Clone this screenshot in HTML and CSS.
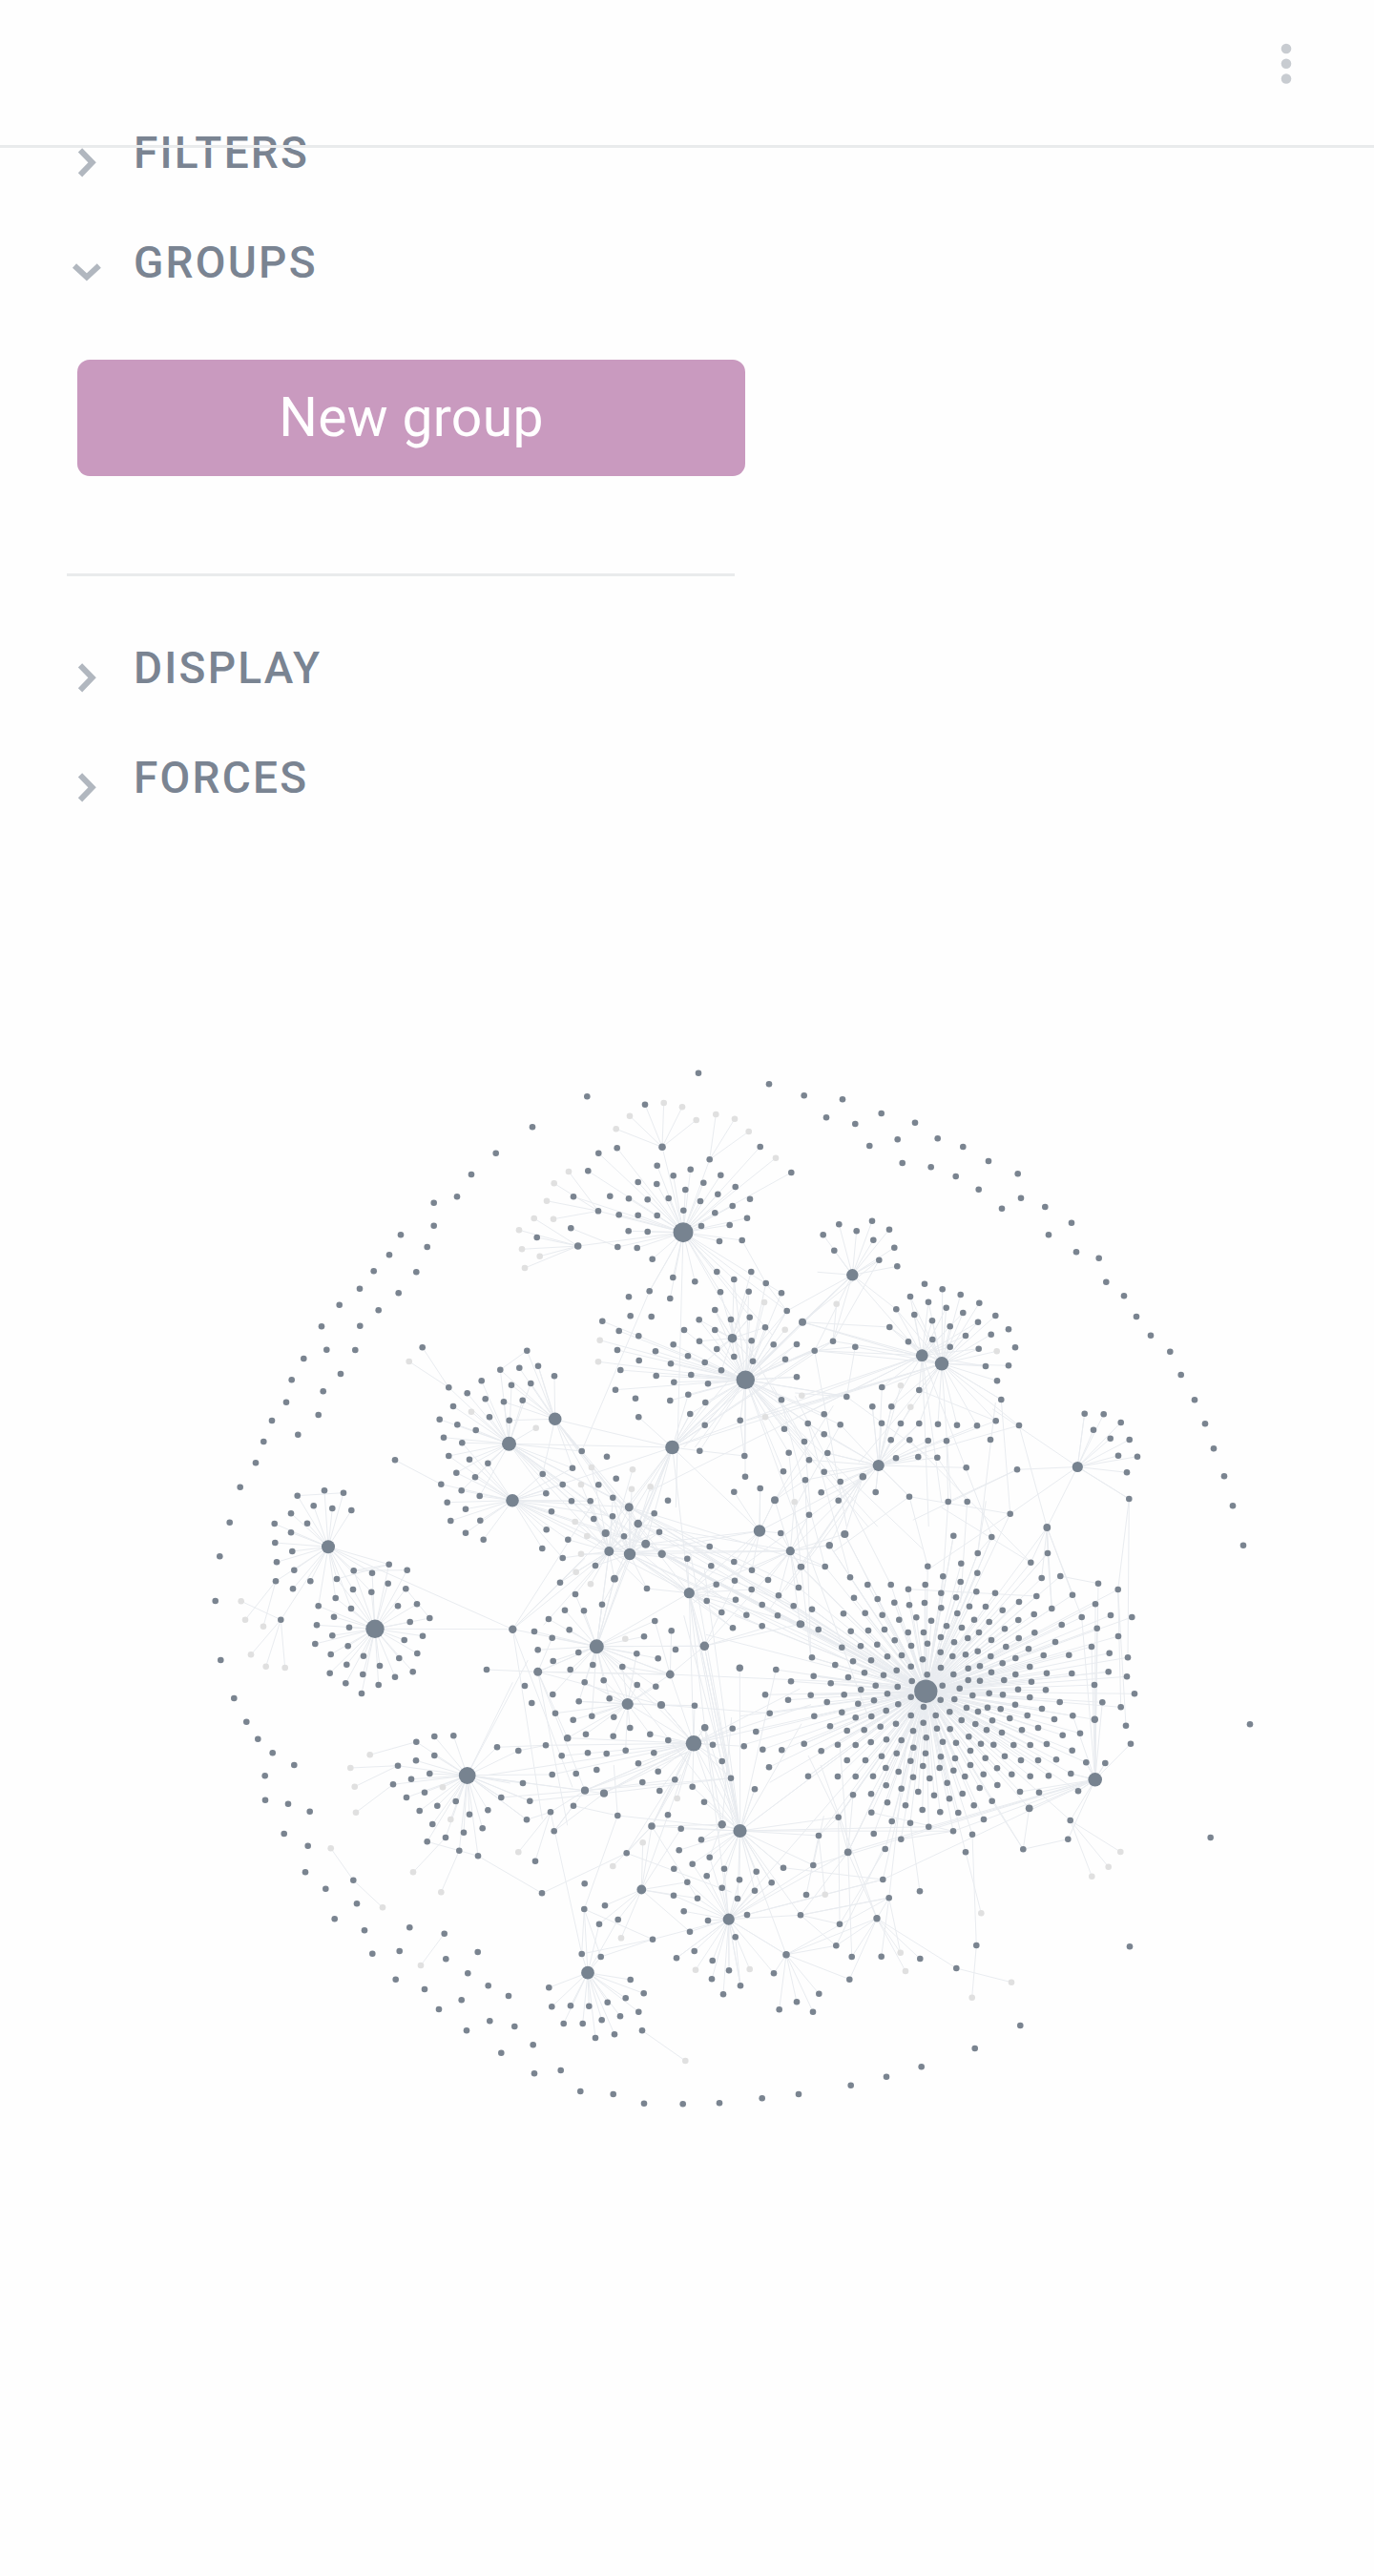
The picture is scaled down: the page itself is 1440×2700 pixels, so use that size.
FILE: index.html
```html
<!DOCTYPE html>
<html lang="en">
<head>
<meta charset="utf-8">
<title>Graph view</title>
<link rel="stylesheet" href="styles.css">
</head>
<body>
<header class="topbar">
  <button class="more" aria-label="More options">
    <svg width="12" height="44" viewBox="0 0 12 44"><circle cx="6" cy="6" r="5.3"/><circle cx="6" cy="21.7" r="5.3"/><circle cx="6" cy="37.5" r="5.3"/></svg>
  </button>
</header>
<main class="view">
  <section class="controls">
    <div class="row"><svg class="chevron" viewBox="0 0 32 32"><path d="M9 2.3 21.6 15.3 9 28.3"/></svg><h2>FILTERS</h2></div>
    <div class="row"><svg class="chevron" viewBox="0 0 32 32"><path d="M3 8.5 15.9 20.5 28.8 8.5"/></svg><h2>GROUPS</h2></div>
    <div class="group-body"><button class="new-group">New group</button></div>
    <div class="row"><svg class="chevron" viewBox="0 0 32 32"><path d="M9 2.3 21.6 15.3 9 28.3"/></svg><h2>DISPLAY</h2></div>
    <div class="row"><svg class="chevron" viewBox="0 0 32 32"><path d="M9 2.3 21.6 15.3 9 28.3"/></svg><h2>FORCES</h2></div>
  </section>
  <svg class="graph" id="graph" viewBox="0 872 1440 1828"></svg>
</main>
<script src="graph.js"></script>
</body>
</html>
```
FILE: styles.css
```css
* { box-sizing: border-box; }
body { margin: 0; background: #fefefe; font-family: Roboto, "Liberation Sans", sans-serif; }
button { border: 0; padding: 0; background: none; font: inherit; }
.topbar { position: relative; z-index: 1; height: 155px; border-bottom: 3px solid #e9ebec; display: flex; justify-content: flex-end; align-items: flex-start; padding: 44.7px 86.5px 0 0; }
.more { display: flex; }
.more svg { fill: #c8ccd1; }
.view { display: flex; flex-direction: column; margin-top: -53px; }
.controls { width: 770px; padding-left: 70px; }
.row { display: flex; align-items: center; height: 115px; gap: 33px; padding-left: 5px; }
.row h2 { margin: 0; font-size: 46px; font-weight: 500; line-height: 54px; letter-spacing: 2.25px; color: #7a8492; }
.chevron { width: 32px; height: 32px; margin-top: 22px; fill: none; stroke: #b1b7bf; stroke-width: 6; }
.group-body { height: 310px; padding: 45px 0 38px 11px; display: flex; flex-direction: column; justify-content: space-between; align-items: flex-start; }
.new-group { width: 700px; height: 122px; border-radius: 13px; background: #c99abf; color: #fff; font-size: 57px; letter-spacing: 0.35px; line-height: 122px; flex: none; }
.group-body::after { content: ""; width: 700px; height: 3px; margin-left: -11px; background: #e9ebec; }
.graph { display: block; width: 1440px; height: 1828px; }
.link { stroke: #e9ecf0; stroke-width: 1; fill: none; }
.node { fill: #7a8490; }
.node-hub { fill: #778390; }
.node-pale { fill: #e0e0e0; }
```
FILE: graph.js
```js
// Each region stores coordinates at three units per pixel, from its own origin.
// nodes: "x,y" or "x,y,radius"; pale: unresolved notes; fans: "source:target target".
const regions = [
{ at: [200, 1100],
  nodes: `959,326 882,393 837,463 764,482 764,554 660,583 743,621 624,646 575,697 709,700 531,752 653,766 467,803 590,820 411,871 532,869 427,944 517,945 355,972 471,1020 317,1039 416,1075 300,1109 728,937 811,1063 869,1081 914,1042 926,1099 825,1122`,
  pale: `686,981 882,1139`,
  fans: `811,1063:728,937 686,981 1000,1240;1000,1240:882,1139` },
{ at: [520, 1100],
  nodes: `636,74 858,109 286,148 114,244 468,173 380,310 322,326 289,382 243,463 522,307,3.8 671,346 830,306 928,387 506,365 557,397 611,377 706,395 446,417 505,423 595,441 652,419 752,432 697,455 358,461 417,469 476,472 542,468 642,477 798,470 743,492 321,508 386,520 446,521 506,522 589,506 688,514 789,530 235,562 128,591 257,618,3.8 416,571 476,573 645,555 734,552 702,603 773,600 382,621 443,624 491,659 694,699 802,699 556,717 625,730 748,723 848,735 482,760 417,778 547,783 705,763 794,761 897,766 688,819 422,838 488,840 638,850 738,849 797,842 914,822 334,854 386,885 591,882 688,882 846,874 448,901 639,917 803,916 557,928 694,942 872,928 945,927 381,945 501,949 603,964 656,984 748,966 807,980 909,974 449,978 549,988 391,1008 503,1026 613,1023 708,1009 559,1046 666,1051 945,1030 375,1070 604,1085 438,1097 547,1104 658,1110 897,1102 97,947 13,1007 73,1001 132,995 183,1027 48,1055 109,1050 24,1108 83,1103`,
  pale: `527,168 585,181 420,209 629,222 377,250 691,204 750,218 794,258 879,341 228,384 182,421 159,476 119,531 180,533 72,568 81,628 137,650 90,687 843,795 908,881 326,914 321,982 961,1088`,
  fans: `522,307:468,173 527,168 585,181 420,209 629,222 377,250;671,346:691,204 750,218 794,258;321,508:228,384 182,421 159,476 180,533;257,618:119,531 72,568 81,628 137,650 90,687 128,591;588,575:522,307 671,346 321,508 257,618 380,310 322,326 289,382 243,463 830,306 879,341 928,387 482,760 914,822 897,766 870,900 800,842 565,1440 1000,1300;382,621:235,562;784,1039:326,914 321,982 334,854 381,945 375,1070 391,1008 386,885 843,795 908,881 914,822 963,857 1059,917 1001,947 1120,709 945,1030 1102,1091 555,1251 590,1251 625,1251 1170,1501 1200,1501 1340,1570 1170,2100;554,1251:1120,709 963,857 1001,947 914,822 945,927 1059,917 1339,962 1401,988 658,1110 604,1085 610,1145;742,908:748,723 802,699 794,761 688,819 797,842;482,760:270,1260;848,735:773,600 914,822;1120,709:914,822 963,857 1010,700;183,1163:97,947 13,1007 73,1001 132,995;13,1007:97,947` },
{ at: [840, 1100],
  nodes: `8,145 129,157 78,214 169,234 251,201 357,230 214,303 302,283 428,280 508,306 588,351 680,391 317,357 407,370 485,399 557,440 630,500 690,467 766,495 849,545 777,583 864,637 935,656 958,731 1014,775 1053,840 1098,899 1159,950 1193,1023 1236,1102 118,550 68,583 173,571 222,539 276,566 226,599 103,632 292,623 244,662 301,682 387,737 443,754 342,777 399,794 500,771 559,797 298,817 355,834 455,812 508,828 610,837 411,853 467,871 555,857 651,880 277,873 516,900 596,896 412,912 336,919 467,935 557,941 672,937 579,996 651,994 615,1042 628,1101 370,1071 3,857,4 41,947 99,917 169,935 142,1092 253,1062 223,1123 283,1123`,
  pale: `110,800 614,949 312,1057 343,1124`,
  fans: `3,857:160,709 277,873 379,962 441,988 244,662;41,947:160,709 379,962 441,988 169,935 142,1500;99,917:160,709 110,800 244,662 379,962;169,935:441,988 142,1092;160,709:379,962;441,988:614,949 628,1101 684,1183 611,1168 370,1071 0,1120 -170,1166 470,1420;379,962:0,1090 -20,1160 -480,1390 440,1422 400,1500 600,1533;628,1101:656,1460;370,1071:180,1300 611,1168;242,1308:312,1057 343,1124 253,1062 223,1123 283,1123;142,1092:400,1280 -20,1080;890,1143:868,1312` },
{ at: [200, 1480],
  nodes: `255,27 401,9 337,71 229,93 204,160 155,236 122,347 91,454 77,594 94,780 136,900 175,974 211,1028 257,1072 325,1110 782,23 838,40 896,57 939,16 1001,26 795,80 853,97 811,138 876,149 934,161 642,151 835,191 894,205 787,227 851,247 908,264 806,284 864,305 817,342 910,341 864,380 920,401 335,263 420,247 480,254 386,295 445,303 505,309 315,319 263,351 366,350 315,379 265,411 319,438 270,472 325,497 267,532 376,532 321,556 283,653 512,499 570,506 623,479 680,497 459,525 620,539 510,558 568,566 676,556 455,585 401,610 504,618 651,610 711,604 450,644 751,648 396,670 498,677 689,660 445,703 729,704 391,729 494,736 671,717 440,762 712,759 543,767 655,774 490,794 594,798 437,821 698,817 541,825 487,853 590,858 642,833 537,885 930,810 709,1037 766,1020 826,1018 766,1080 708,1096 651,1112 751,1137`,
  pale: `158,595 171,653 228,674 189,763 236,800 296,804 563,1078 502,1119`,
  fans: `787,227:642,151;335,263:480,254;267,532:171,653 228,674;283,653:158,595 189,763 236,800 296,804 432,424;432,424:1012,683;579,682:1012,683;623,479:459,525 512,499;512,499:680,497;676,556:751,648;709,1037:563,1078;651,1112:502,1119 515,1178;869,1142:1012,850 1060,780 1135,1140 1239,1190 1299,1199 1004,1167;1029,1065:1116,1048;963,1054:1116,1048;1091,817:930,810;1012,683:1239,460 1305,390 1200,1180 1276,737 1275,270` },
{ at: [520, 1480],
  nodes: `448,16 610,6 656,41 767,26 906,53 640,122 781,138 920,128 903,187 783,203 748,251 830,240 876,277,4 895,381 540,278 269,123 348,140 240,176 146,195 377,209 209,228 322,229 157,256 237,280 296,280 367,269 174,313 307,336 366,328 418,299,4.5 446,351,4.3 497,319 158,370 344,381,4.1 402,391 513,377 226,401 470,415,4.5 145,429 521,446,4.2 209,459 601,461 671,423 312,483 372,524,3.9 676,484 201,536 748,471 804,497 249,573 474,555 692,542 750,530 855,528 803,558 957,487 951,552 333,605 216,623 276,625 662,594 753,590 888,577 836,606 935,610 709,630 787,638 885,640 956,667,4 165,651 744,679 836,673 120,690 230,685 499,657 551,688 52,683,4.2 176,710 465,706 131,748 259,756 564,747 442,760 509,775 655,736,4.8 179,783 233,810 304,795 397,801 131,817,4.5 547,825,4.4 766,805,3.7 880,810 927,847 278,850 338,844 443,858 502,863 90,861 178,888 846,889 918,905 356,901 260,910 112,915 519,921,4.1 624,923 186,947 301,956 370,959 242,968 860,947 421,993 656,992,3.8 743,995 817,1005 282,1013 224,1025,3.8 368,1019 484,1013 541,1032 681,1046 779,1051 838,1061 898,1063 156,1048 70,1065 3,1054 407,1064 206,1081 288,1072 347,1074 496,1072 447,1105 710,1098 858,1117 509,1130 316,1125 251,1137 176,1140`,
  pale: `125,50 846,16 300,174 429,181 267,228 426,242 485,235 248,345 286,390 267,446 251,503 297,541 406,713 938,283`,
  fans: `41,100:125,50 554,111 344,381 420,447 355,438 418,299 366,269 470,415 521,446 607,569;185,23:420,447 418,299 446,351 470,415 521,446 607,569 554,111;51,278:344,381 355,438 420,447 418,299 366,328 470,415 554,111;554,111:418,299 446,351 355,438 344,381 421,447 470,415 828,374 607,569 372,524 316,737;355,438:52,683 316,737 149,670 297,541 251,503 248,345 267,228 300,174 429,181 607,569 925,437;420,447:607,569 709,630 744,679 1351,878 1331,890 925,437 316,737 267,446 286,390 828,374 426,242 485,235;470,415:1351,878 1341,870 955,667 836,606 935,610 344,381 828,374 671,423;446,351:1351,878 888,577 804,497 418,299 925,437;418,299:1351,870 1351,885 1022,486 855,528 951,552;521,446:1351,878 1347,888 955,667 885,640 787,638 1340,868;607,569:955,667 655,736 621,1042 767,1317 750,1317 836,673 662,594 692,542 753,590 744,679 803,558 474,555;828,374:748,251 830,240 876,277 607,569 655,736 1156,203;925,437:607,569 655,736 828,374 955,667 1156,203 1097,383 1049,418;655,736:316,737 547,825 767,1317 840,680 955,667;316,737:607,569 372,524 333,605 547,825 621,1042 414,917 655,736 767,1317;547,825:131,817 316,737 397,801 499,657 551,688 1351,860 621,1042;131,817:316,737 176,710 224,1025 224,1300 279,1190 519,921 547,825;414,917:621,1042 519,921 242,968 224,1025 186,947 547,825 260,910 278,850;519,921:621,1042 624,923 414,917 443,858 860,947;621,1042:656,992 955,870 990,920 1351,878 279,1190 338,1199 224,1025 489,1302 457,1501 710,1298 767,1317 -30,1142 206,1081 156,1048 176,1140 519,921;656,992:767,1317 607,569 710,1298 731,1594;52,683:145,1280;781,138:767,26 640,122;767,1317:607,569 640,1000 655,736 960,980 880,810 766,805 1351,878;876,277:990,150 1060,-20 925,437 970,215;970,93:870,-80 990,330;989,772:920,128 972,214;938,283:925,437` },
{ at: [840, 1480],
  nodes: `20,36 71,7 122,40 71,70 9,93 82,129 24,151 71,188 12,214 122,219 62,253 116,278 24,323 233,252 193,203,3.8 136,384,4.1 88,419,3.7 339,266 252,35 312,36 370,36 429,38 489,41 552,43 611,28 684,42 281,88 340,88 398,90 456,91 594,87 297,145 367,141 427,143 518,175 678,181 461,282 521,282 656,320 478,389 598,393 772,363,3.9 890,5 950,7 1004,33 918,56 971,83 1031,87 996,137 1056,140 1023,190 1030,273 1269,37 1296,115 1329,202 1356,295 1389,419 1410,982 554,444 774,444 721,473 0,487 74,486 397,485 502,476 153,520 445,517 553,506 755,522 814,516 208,543 281,543 336,557 389,543 500,534 550,565 609,569 933,539 995,558 439,569 486,583 739,579 852,575 165,584 239,588 292,599 339,607 387,600 684,597 924,604 33,620 439,616 528,611 579,612 632,623 787,618 132,634 200,632 254,638 490,633 731,636 881,645 972,639 1039,645 307,653 361,646 408,656 543,653 590,660 682,654 0,667 53,684 155,689 210,687 261,684 335,693 384,693 456,673 504,678 558,693 639,682 733,694 818,669 929,680 996,705 438,708 523,711 597,717 683,711 293,718 396,728 480,724 798,723 127,740 186,736 238,731 345,735 643,738 714,745 912,738 437,755 554,752 968,758 270,769 315,765 475,768 516,763 595,768 673,774 761,765 841,764 1026,772 33,772 162,784 219,781 381,778 106,795 344,800 438,804 524,806 561,799 632,790 718,801 198,820 299,812 597,818 673,825 771,821 850,822 965,817 38,830 147,834 258,827 395,826 478,825 1023,832 92,853 347,846 524,843 561,845 637,843 723,848 921,858 233,860 302,864 443,860 187,873 497,869 681,872 768,874 29,890 134,889 270,886 538,891 590,884 633,889 1047,886 344,896 718,897 80,912 228,907 178,917 304,919 437,905 481,903 812,912 946,913 672,920 127,944 266,939 384,927 519,930 585,929 626,934 756,933 1004,928 40,956 170,961 220,957 344,954 422,954 466,943 555,942 655,963 710,954 795,966 853,955 922,967,3.7 90,988 248,989 297,980 383,977 503,969 547,981 600,970 1020,986 143,1002 197,1000 351,1003 426,995 467,997 582,1000 630,1008 693,1000 744,993 821,1016 876,1010 8,1043 218,1038 267,1030 314,1032 392,1024 526,1021 444,1037 114,1046 170,1047 352,1055 486,1040 564,1043 604,1046 667,1047 719,1047 771,1044 1035,1043 62,1066 531,1065 851,1064 252,1082 299,1073 390,1073 438,1084 143,1095 201,1095 343,1097 483,1089 578,1088 639,1082 690,1095 744,1095 801,1093 895,1102 955,1104 265,1119 382,1113 434,1119 531,1110 615,1120 305,1131 478,1127 572,1139 661,1139 847,1137`,
  fans: `242,168:20,36 233,252 684,42 611,28 552,43 518,175 193,203 339,266 -340,600 12,214 24,151 82,129 -50,560;193,203:242,168 116,278 136,384 88,419 -10,500 -100,620 370,36;868,172:600,-10 656,320 772,363 1030,273;772,363:755,522 721,473 852,575 774,444 881,645 787,618 391,878;1030,273:995,558 1026,772;995,558:391,878 1020,986 1004,928;339,266:397,485 656,320 100,440;678,181:461,282 350,340;684,42:772,363;656,320:391,878 391,500;721,473:340,88 440,300;774,444:391,878 787,618;814,516:933,539;598,393:391,878 554,444;478,389:391,878;461,282:440,600 456,91;521,282:500,600 427,143;554,444:610,-30 580,280 391,878;923,1156:922,967 946,913 881,645 921,858 1035,1043 955,1104 895,1102 853,955 929,680 912,738 933,539 847,1137 924,604;391,878:33,772 38,830 29,890 40,956 8,1043 62,1066 -193,956 -182,1046 0,667 53,684 33,620 136,384 88,419 -300,700 -340,430 -210,640 1039,645 1026,772 1023,832 1047,886 1004,928 996,705 968,758 965,817 972,639 924,604 20,1145 -100,1165 -193,1317 -229,1594 146,1384 115,1273;739,579:336,557;20,36:153,520;122,40:-20,300;74,486:-60,-20;281,543:-20,-50` },
{ at: [200, 1860],
  nodes: `233,4 234,80 306,92 374,116 293,186 368,224 360,307 424,359 511,332 522,406 452,454 546,490 688,481 797,500 571,563 656,555 802,580 902,558 644,644 871,625 735,675 935,664 851,709 780,738 940,775 867,805 636,31 693,14 678,72 735,56 719,114 775,98 833,84 760,156 743,211 801,198 858,182 876,125 934,112 917,169 844,239 903,256`,
  pale: `515,38 519,119 792,40 817,141 699,307 787,370 440,232 603,418 723,600`,
  fans: `636,31:519,119;801,198:699,307;844,239:787,370 743,211 903,256;903,256:1104,373;511,332:440,232 603,418;797,500:723,600;869,2:792,40 817,141 977,72 1056,142 1066,83` },
{ at: [520, 1860],
  nodes: `16,72 84,27 106,83 96,142 171,118 243,98 182,178 279,50,4.1 339,59,4.1 123,272 144,373 278,343 382,129 410,247 489,162,3.8 540,127 460,24 514,51 562,16 617,38 654,86 738,11 813,46 710,157,4.2 581,170 645,205 575,238 671,260 559,296 617,281 717,296 818,305 903,293 765,331 662,319 601,338 710,356 866,340 813,365 558,380 633,389 759,390 590,430 666,459 789,441 609,494 752,511 277,423 342,412 383,456 324,470 492,518 269,564 329,573 567,577 623,555 680,585 732,616 678,643 768,664 714,691 912,566,3.8 873,625 890,739 945,715 957,442 166,670 422,645 464,688 407,703 350,716 292,728 234,727 175,730 212,783 272,783 332,772 390,760 448,746 312,828 372,817 459,805 58,792 116,850 16,875 120,940 203,930 265,996 368,1005 465,1034 587,1036 702,1033 836,1018 951,1005 39,696`,
  pale: `569,75 461,214 70,244 367,288 393,514 627,614 797,612 595,900`,
  fans: `171,118:70,244 123,272 269,564 279,50 96,142;182,178:279,50 339,59 243,98;144,373:410,247;410,247:489,162 560,10 740,370;489,162:600,-70 580,0 710,157 633,389 367,288;457,362:461,214 489,162 342,412 383,456 393,514 601,338 633,389 558,380 609,494 324,470 581,170;492,518:277,423 269,564 329,573 731,455;277,423:269,564 329,573 382,129;459,805:595,900;382,129:370,-30 243,98 767,170;279,50:621,-98 600,-70 562,16 16,72 738,11;339,59:621,-98 600,-70 106,83 738,11;569,75:621,-98;767,177:1014,192 997,285 912,566 957,442 590,-500 655,-644 610,-700 1076,134 1360,164 1438,178 813,46 489,162 903,293 866,340;731,455:627,614 797,612 866,340 1106,244 1216,330 997,285 912,566 714,691 768,664 732,616 567,577;912,566:1068,538 1235,387 873,625 890,739 945,715 1015,689 996,746 1112,644 1197,452;752,511:768,664;710,157:740,-180 671,260 645,205;957,442:1080,470 1068,538 1235,387 1106,244;903,293:1216,330` },
{ at: [840, 1860],
  nodes: `21,5 114,6 170,6 225,5 351,8 403,12 514,6 719,5 777,4 458,26 266,34 314,44 162,64 219,61 367,54 417,65 506,60 560,42 616,33 687,54 747,56 870,52 465,76 270,88 327,97 380,111 436,118 493,120 542,97 599,83 716,106,3.9 220,119 116,134 284,147 342,152 400,164 573,141 845,144 54,192 227,186 313,203 477,178 537,188 838,203 263,234 146,244,3.9 516,244 697,235 37,285 256,330 372,367 275,388 15,378 120,470 237,452,3.7 109,538 158,573 251,572 373,579 151,644 487,609 55,689 36,746 550,537 1286,198 1032,541 688,789 545,861 377,919 267,950 155,977`,
  pale: `1003,243 965,290 913,320 74,377 311,560 327,618 565,436 660,653 536,701`,
  fans: `923,16:716,106 687,54 747,56 870,52 838,203 845,144 256,330 146,244 37,285 477,178 400,164;845,144:1003,243 965,290 913,320 747,56;716,106:697,235;697,235:838,203 599,83;54,192:74,377;537,188:550,537;516,244:565,436;550,537:536,701;487,609:660,653 237,452;237,452:275,388 311,560 327,618 373,579 109,538 158,573 151,644 146,244 60,-30;275,388:-3,442 251,572 311,560 330,-100;256,330:-229,455 391,-262;146,244:391,-262 116,134 120,-100 162,64 158,573;116,134:120,470 391,-262 21,-60;372,367:342,152;109,538:256,234;120,470:263,234;54,192:116,134 15,378;477,178:220,119;37,285:70,130;313,203:477,178` }
];

// Well connected notes: x, y, radius and how far their own leaves spread.
const hubs = [
  [716,1291.7,10.5,78],[781.3,1446.3,9.7,112],[767.5,1402.7,4.8,40],[893.3,1336.3,6.2,62],
  [966.3,1420.7,6.4,70],[987,1429.3,7.2,78],[581.7,1487.3,6.8,64],[533.5,1513.3,7.5,80],
  [537,1572.7,6.8,82],[704.5,1517,7.3,48],[638.3,1626,5,64],[660,1629,6.2,66],
  [722.3,1669.7,5.6,40],[796,1604.5,6.2,48],[828.3,1625.7,4.6,50],[625.3,1725.7,7.5,76],
  [657.7,1786,6.1,54],[727,1827.3,8.3,62],[970.3,1772.7,12.2,196],[920.7,1536,6.1,68],
  [1129.3,1537.5,5.6,70],[1147.7,1865.3,7.3,34],[344,1621.3,7,70],[393,1707.3,9.7,72],
  [489.7,1861,8.9,86],[616,2067.7,6.9,72],[672.3,1980.5,4.9,30],[775.5,1919,7.1,72],
  [763.7,2011.7,6.1,76]
];

const nodes = [];
const links = [];
for (const { at: [ox, oy], nodes: solid = "", pale = "", fans = "" } of regions) {
  const place = s => { const [x, y, r] = s.split(",").map(Number); return [ox + x / 3, oy + y / 3, r || 3.3]; };
  solid.split(" ").filter(Boolean).forEach(s => nodes.push([...place(s), "node"]));
  pale.split(" ").filter(Boolean).forEach(s => nodes.push([...place(s), "node-pale"]));
  for (const fan of fans.split(";").filter(Boolean)) {
    const [from, to] = fan.split(":");
    to.split(" ").forEach(t => links.push([place(from), place(t)]));
  }
}
for (const hub of hubs)
  for (const n of nodes)
    if (n[3] === "node" && Math.hypot(n[0] - hub[0], n[1] - hub[1]) < hub[3]) links.push([hub, n]);

const f = v => v.toFixed(1);
const d = links.map(([a, b]) => `<path d="M${f(a[0])} ${f(a[1])}L${f(b[0])} ${f(b[1])}"/>`).join("");
const dot = (x, y, r, c) => `<circle class="${c}" cx="${f(x)}" cy="${f(y)}" r="${r}"/>`;
document.getElementById("graph").innerHTML =
  `<g class="link">${d}</g>` +
  nodes.map(n => dot(n[0], n[1], n[2], n[3])).join("") +
  hubs.map(h => dot(h[0], h[1], h[2], "node-hub")).join("");
```
